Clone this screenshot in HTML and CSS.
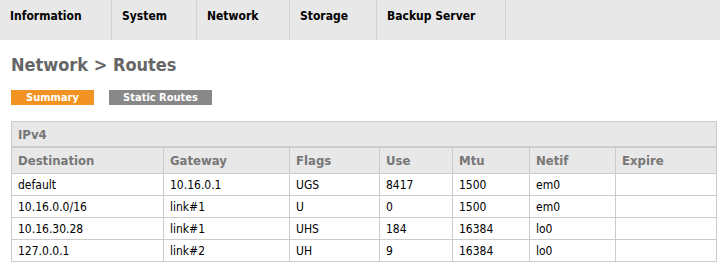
FILE: index.html
```html
<!DOCTYPE html>
<html lang="en">
<head>
    <meta charset="UTF-8">
    <link rel="stylesheet" href="styles.css">
    <title>Network > Routes</title>
</head>
<body>
    <ul class="nav">
        <li class="nav-item" style="width: 112px">Information</li>
        <li class="nav-item" style="width: 85px">System</li>
        <li class="nav-item" style="width: 93px">Network</li>
        <li class="nav-item" style="width: 87px">Storage</li>
        <li class="nav-item" style="width: 129px">Backup Server</li>
    </ul>

    <div class="content">
        <h2 class="title">Network &gt; Routes</h2>

        <div class="tabs">
            <span class="tab tab-active">Summary</span>
            <span class="tab tab-static">Static Routes</span>
        </div>

        <table class="routes">
            <colgroup>
                <col style="width: 152px">
                <col style="width: 126px">
                <col style="width: 90px">
                <col style="width: 73px">
                <col style="width: 77px">
                <col style="width: 86px">
                <col>
            </colgroup>
            <tr class="caption-row"><th colspan="7">IPv4</th></tr>
            <tr class="head-row">
                <th>Destination</th><th>Gateway</th><th>Flags</th><th>Use</th><th>Mtu</th><th>Netif</th><th>Expire</th>
            </tr>
            <tr><td>default</td><td>10.16.0.1</td><td>UGS</td><td>8417</td><td>1500</td><td>em0</td><td></td></tr>
            <tr><td>10.16.0.0/16</td><td>link#1</td><td>U</td><td>0</td><td>1500</td><td>em0</td><td></td></tr>
            <tr><td>10.16.30.28</td><td>link#1</td><td>UHS</td><td>184</td><td>16384</td><td>lo0</td><td></td></tr>
            <tr><td>127.0.0.1</td><td>link#2</td><td>UH</td><td>9</td><td>16384</td><td>lo0</td><td></td></tr>
        </table>
    </div>
</body>
</html>
```

FILE: styles.css
```css
body {
    margin: 0;
    font-family: Tahoma, "DejaVu Sans Condensed", "DejaVu Sans", sans-serif;
    font-size: 12px;
    color: #000;
    background-color: #fff;
}

.nav {
    display: flex;
    margin: 0;
    padding: 0;
    list-style: none;
    height: 40px;
    background-color: #e8e8e8;
}

.nav-item {
    box-sizing: border-box;
    padding: 8px 0 0 10px;
    font-size: 12px;
    line-height: 16px;
    font-weight: bold;
    border-right: 1px solid #d4d4d4;
}

.content {
    padding: 0 4px 0 11px;
}

.title {
    margin: 14px 0 0;
    font-size: 18px;
    line-height: 22px;
    color: #666;
}

.tabs {
    display: flex;
    gap: 15px;
    margin-top: 14px;
}

.tab {
    display: block;
    box-sizing: border-box;
    height: 15px;
    line-height: 15px;
    font-size: 11px;
    font-weight: bold;
    color: #fff;
    background-color: #888;
    text-align: center;
}

.tab-active {
    width: 83px;
    background-color: #f29222;
}

.tab-static {
    width: 103px;
}

.routes {
    width: 706px;
    margin-top: 16px;
    border-collapse: collapse;
    table-layout: fixed;
}

.routes th,
.routes td {
    border: 1px solid #ccc;
    padding: 0 6px;
    text-align: left;
    white-space: nowrap;
}

.routes th {
    background-color: #e8e8e8;
    color: #777;
    font-size: 13px;
}

.caption-row th {
    height: 24px;
    border-bottom-width: 2px;
}

.head-row th {
    height: 25px;
}

.routes td {
    height: 21px;
}
```
